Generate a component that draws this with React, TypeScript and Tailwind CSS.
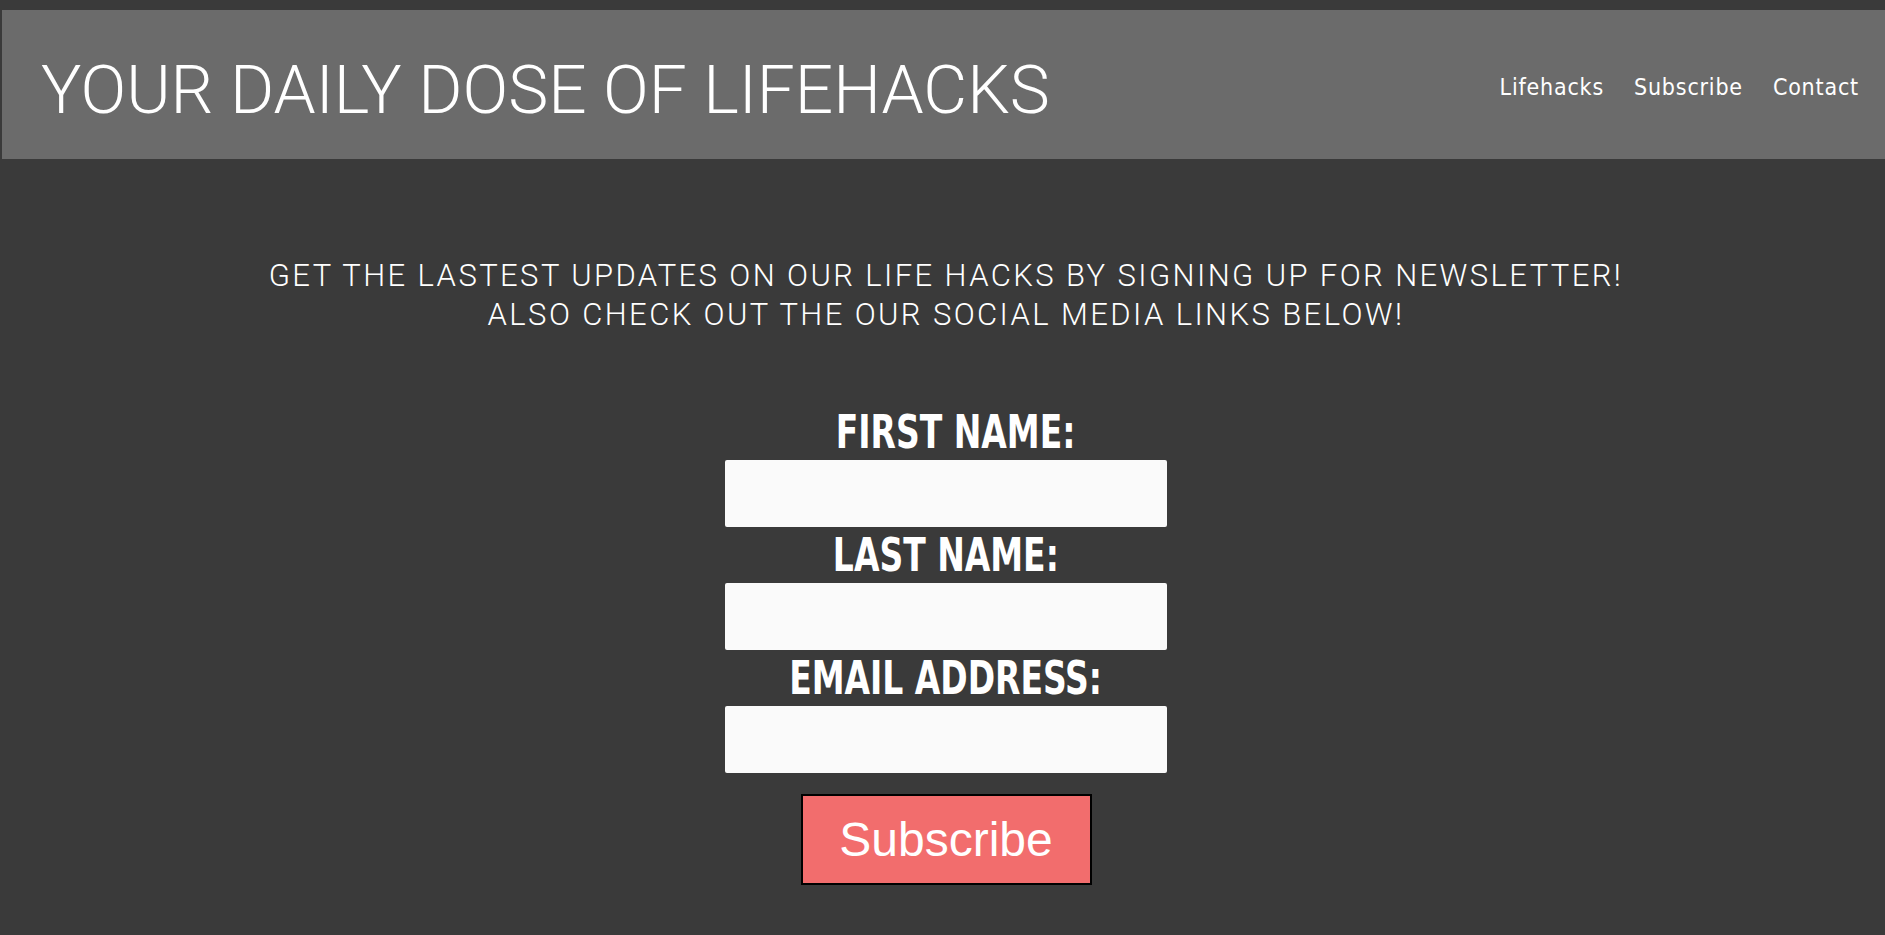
export default function App() {
  return (
    <div className="min-h-screen bg-[#3a3a3a] pt-[10px] pl-[2px] pb-[40px]">
      {/* Header */}
      <header className="flex h-[149px] items-center justify-between bg-[#6b6b6b] text-white">
        <h1 className="pl-[39px] pt-[10px] font-['Roboto',sans-serif] text-[67.5px] font-light leading-none">
          YOUR DAILY DOSE OF LIFEHACKS
        </h1>
        <nav className="flex items-center gap-[30px] pr-[26px] pt-[5px] font-['DejaVu_Sans_Condensed','DejaVu_Sans',sans-serif] text-[23px] tracking-[0.8px]">
          <a href="#">Lifehacks</a>
          <a href="#">Subscribe</a>
          <a href="#">Contact</a>
        </nav>
      </header>

      {/* Newsletter */}
      <main className="flex flex-col items-center pl-[5px] pt-[97px] text-white">
        <p className="text-center font-['Roboto',sans-serif] text-[31px] font-light leading-[39px] tracking-[2.4px]">
          GET THE LASTEST UPDATES ON OUR LIFE HACKS BY SIGNING UP FOR NEWSLETTER!
          <br />
          ALSO CHECK OUT THE OUR SOCIAL MEDIA LINKS BELOW!
        </p>

        <form className="mt-[70px] flex flex-col items-center">
          <label className="h-[56px] pl-[19px] font-['DejaVu_Sans_Condensed','DejaVu_Sans',sans-serif] text-[47px] font-bold leading-[56px]">
            <span className="inline-block scale-x-[0.78]">FIRST NAME:</span>
          </label>
          <input type="text" className="h-[67px] w-[442px] rounded-[2px] bg-[#fafafa] outline-none" />
          <label className="h-[56px] font-['DejaVu_Sans_Condensed','DejaVu_Sans',sans-serif] text-[47px] font-bold leading-[56px]">
            <span className="inline-block scale-x-[0.78]">LAST NAME:</span>
          </label>
          <input type="text" className="h-[67px] w-[442px] rounded-[2px] bg-[#fafafa] outline-none" />
          <label className="h-[56px] font-['DejaVu_Sans_Condensed','DejaVu_Sans',sans-serif] text-[47px] font-bold leading-[56px]">
            <span className="inline-block scale-x-[0.78]">EMAIL ADDRESS:</span>
          </label>
          <input type="email" className="h-[67px] w-[442px] rounded-[2px] bg-[#fafafa] outline-none" />
          <button
            type="button"
            className="mt-[21px] h-[91px] w-[291px] border-2 border-black bg-[#f26d6d] font-['Liberation_Sans',Arial,sans-serif] text-[48px] text-white"
          >
            Subscribe
          </button>
        </form>
      </main>
    </div>
  );
}
